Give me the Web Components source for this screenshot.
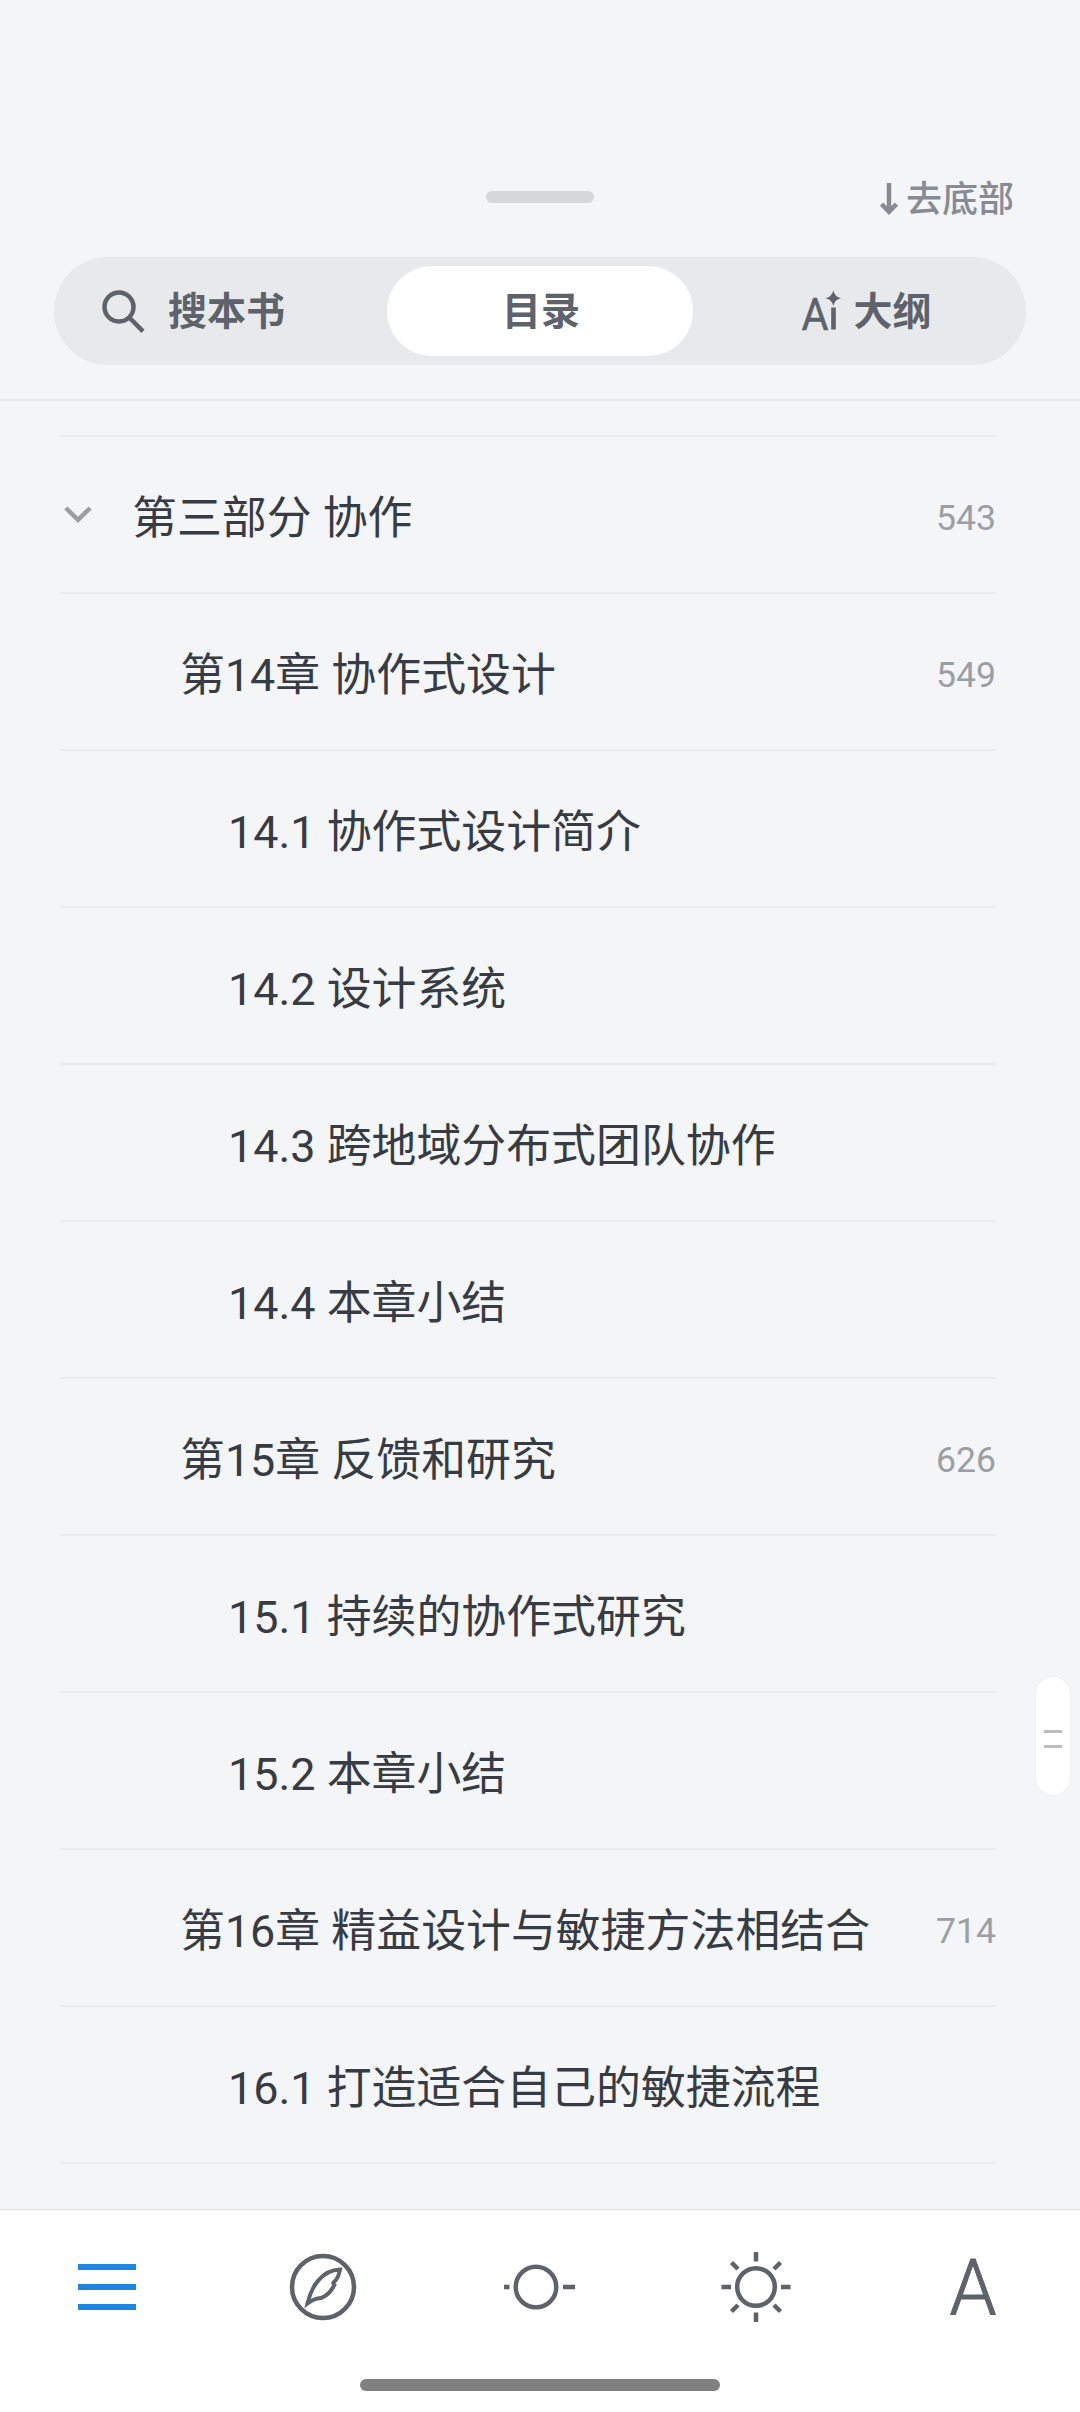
<!DOCTYPE html>
<html lang="zh-CN">
<head>
  <meta charset="UTF-8">
  <title>目录</title>
  <style>
    body {
      margin: 0;
      background: #f3f5f7;
      font-family: Roboto, "Noto Sans CJK SC", sans-serif;
    }
  </style>
</head>
<body>
  <reader-panel>
    <panel-header slot="header">去底部</panel-header>
    <segment-tabs slot="header">
      <segment-tab icon="search">搜本书</segment-tab>
      <segment-tab active>目录</segment-tab>
      <segment-tab icon="ai">大纲</segment-tab>
    </segment-tabs>
    <toc-row level="1" page="543" open>第三部分 协作</toc-row>
    <toc-row level="2" page="549">第14章 协作式设计</toc-row>
    <toc-row level="3">14.1 协作式设计简介</toc-row>
    <toc-row level="3">14.2 设计系统</toc-row>
    <toc-row level="3">14.3 跨地域分布式团队协作</toc-row>
    <toc-row level="3">14.4 本章小结</toc-row>
    <toc-row level="2" page="626">第15章 反馈和研究</toc-row>
    <toc-row level="3">15.1 持续的协作式研究</toc-row>
    <toc-row level="3">15.2 本章小结</toc-row>
    <toc-row level="2" page="714">第16章 精益设计与敏捷方法相结合</toc-row>
    <toc-row level="3">16.1 打造适合自己的敏捷流程</toc-row>
    <scroll-thumb slot="thumb"></scroll-thumb>
    <bottom-bar slot="footer"></bottom-bar>
  </reader-panel>

  <script>
    class ReaderPanel extends HTMLElement {
      constructor() {
        super();
        this.attachShadow({mode: 'open'});

        this.shadowRoot.innerHTML = `
        <style>
          :host {
            display: flex;
            flex-direction: column;
            position: relative;
            width: 1080px;
            height: 2412px;
            overflow: hidden;
          }
          header {
            box-sizing: border-box;
            height: 401px;
            padding-top: 170px;
            border-bottom: 2px solid #e9ebed;
          }
          main {
            flex: 1;
            padding: 34px 84px 0 60px;
          }
          .list {
            border-top: 2px solid #e9ebed;
          }
        </style>
        <header><slot name="header"></slot></header>
        <main><div class="list"><slot></slot></div></main>
        <slot name="footer"></slot>
        <slot name="thumb"></slot>
        `;
      }
    }

    class PanelHeader extends HTMLElement {
      constructor() {
        super();
        this.attachShadow({mode: 'open'});

        this.shadowRoot.innerHTML = `
        <style>
          :host {
            display: grid;
            grid-template-columns: 1fr 108px 1fr;
            align-items: center;
            height: 54px;
            margin-bottom: 33px;
          }
          .handle {
            grid-column: 2;
            height: 12px;
            border-radius: 6px;
            background: #d5d7d9;
          }
          .jump {
            display: flex;
            justify-content: flex-end;
            align-items: center;
            gap: 8px;
            padding-right: 66px;
            color: #868b94;
            font-size: 36px;
            font-weight: 500;
            line-height: 48px;
          }
          .jump span {
            padding-top: 6px;
          }
          svg {
            margin-top: 3px;
          }
        </style>
        <div class="handle"></div>
        <div class="jump">
          <svg width="18" height="32" viewBox="0 0 18 32" fill="none" stroke="currentColor" stroke-width="4.5">
            <path d="M9 0v29M1.500 21L9 28.800l7.500-7.800"/>
          </svg>
          <span><slot></slot></span>
        </div>
        `;
      }
    }

    class SegmentTabs extends HTMLElement {
      constructor() {
        super();
        this.attachShadow({mode: 'open'});

        this.shadowRoot.innerHTML = `
        <style>
          :host {
            display: grid;
            grid-template-columns: 324px 306px 324px;
            box-sizing: border-box;
            height: 108px;
            margin: 0 54px;
            padding: 9px;
            border-radius: 54px;
            background: #e7e9eb;
          }
        </style>
        <slot></slot>
        `;
      }
    }

    const tabIcons = {
      search: `
        <svg width="43" height="43" viewBox="0 0 43 43" fill="none" stroke="currentColor" stroke-width="4.5">
          <circle cx="17" cy="17" r="14.500"/>
          <path d="M27.300 27.500L41 41.300"/>
        </svg>`,
      // the dot of the i is a four-point star
      ai: `
        <svg width="40" height="58" viewBox="0 -8 40 58" fill="currentColor">
          <text x="0.500" y="39.500" font-size="45" textLength="27" lengthAdjust="spacingAndGlyphs">A</text>
          <path d="M30.200 17.500h4.600v22h-4.600zM32.300 0.500q1.400 6.300 7.700 7.700q-6.300 1.400-7.700 7.700q-1.400-6.300-7.700-7.700q6.300-1.400 7.700-7.700z"/>
        </svg>`
    };

    class SegmentTab extends HTMLElement {
      constructor() {
        super();
        this.attachShadow({mode: 'open'});
        const icon = this.getAttribute('icon');

        this.shadowRoot.innerHTML = `
        <style>
          :host {
            display: flex;
            align-items: center;
            justify-content: center;
            border-radius: 45px;
            color: #5d626b;
            font-size: 39px;
            font-weight: 700;
            line-height: 56px;
          }
          :host([active]) {
            background: #fff;
            padding-left: 2px;
          }
          :host([icon="search"]) {
            justify-content: flex-start;
            gap: 23px;
            padding-left: 39px;
          }
          :host([icon="ai"]) {
            gap: 12px;
            padding-left: 23px;
          }
          span {
            padding-top: 2px;
          }
          svg {
            font-weight: 400;
          }
          text {
            stroke: currentColor;
            stroke-width: 0.5px;
          }
        </style>
        ${icon ? tabIcons[icon] : ''}
        <span><slot></slot></span>
        `;
      }
    }

    class TocRow extends HTMLElement {
      constructor() {
        super();
        this.attachShadow({mode: 'open'});
        const indent = 72 + (this.getAttribute('level') - 1) * 48;
        const arrow = `
          <svg width="28" height="18" viewBox="0 0 28 18" fill="none" stroke="#9b9fa5" stroke-width="4.500">
            <path d="M1.800 2L14 13.800L26.200 2"/>
          </svg>`;

        this.shadowRoot.innerHTML = `
        <style>
          :host {
            display: flex;
            align-items: center;
            box-sizing: border-box;
            height: 157px;
            border-bottom: 2px solid #e9ebed;
            color: #373b43;
            font-size: 44.9px;
            line-height: 66px;
          }
          .lead {
            flex: none;
            width: ${indent}px;
            padding: 1px 0 0 4px;
            box-sizing: border-box;
            display: flex;
          }
          .title {
            flex: 1;
            padding-top: 8px;
            white-space: nowrap;
          }
          .page {
            color: #9b9fa5;
            font-size: 35.6px;
            line-height: 52px;
            padding-top: 6px;
          }
        </style>
        <div class="lead">${this.hasAttribute('open') ? arrow : ''}</div>
        <div class="title"><slot></slot></div>
        <div class="page">${this.getAttribute('page') || ''}</div>
        `;
      }
    }

    class ScrollThumb extends HTMLElement {
      constructor() {
        super();
        this.attachShadow({mode: 'open'});

        this.shadowRoot.innerHTML = `
        <style>
          :host {
            position: absolute;
            top: 1677px;
            right: 10px;
            display: flex;
            flex-direction: column;
            align-items: center;
            justify-content: center;
            gap: 12px;
            width: 34px;
            height: 118px;
            padding-top: 6px;
            box-sizing: border-box;
            border-radius: 17px;
            background: #fff;
            box-shadow: 0 0 2px rgba(0, 0, 0, 0.08);
          }
          i {
            width: 18px;
            height: 3px;
            background: #bdbdbd;
          }
        </style>
        <i></i>
        <i></i>
        `;
      }
    }

    class BottomBar extends HTMLElement {
      constructor() {
        super();
        this.attachShadow({mode: 'open'});

        this.shadowRoot.innerHTML = `
        <style>
          :host {
            display: flex;
            flex-direction: column;
            align-items: center;
            box-sizing: border-box;
            height: 203px;
            border-top: 1px solid #dcdedf;
            background: #fff;
            color: #5d626b;
          }
          nav {
            display: flex;
            justify-content: space-between;
            align-items: center;
            box-sizing: border-box;
            width: 100%;
            height: 154px;
            padding: 0 72px;
          }
          svg {
            fill: none;
            stroke: currentColor;
            stroke-width: 4.5;
          }
          .toc {
            color: #1f85e3;
            stroke-width: 6;
          }
          text {
            fill: currentColor;
            stroke-width: 1px;
          }
          .home {
            width: 360px;
            height: 12px;
            margin-top: 15px;
            border-radius: 6px;
            background: #808080;
          }
        </style>
        <nav>
          <svg class="toc" width="72" height="72" viewBox="0 0 72 72">
            <path d="M6 16h58M6 36h58M6 56h58"/>
          </svg>
          <svg width="72" height="72" viewBox="0 0 72 72">
            <circle cx="35" cy="36" r="31"/>
            <path stroke-width="4" d="M19.500 52.500C23 37 33 19 52 18.500C51 24 49.500 28 46.500 30.500Q44 32 46.300 34C41 44.500 34 47.500 30 47.500Q25.500 48 19.500 52.500z"/>
          </svg>
          <svg width="72" height="72" viewBox="0 0 72 72">
            <circle cx="32" cy="36" r="20.300"/>
            <path d="M0 36h5.500M59 36h12"/>
          </svg>
          <svg width="72" height="72" viewBox="0 0 72 72">
            <circle cx="36" cy="36" r="18.800"/>
            <path d="M36 1v9.500M36 61.500V71M1.500 36h9.500M61 36h9.500M11.500 11.500l6.500 6.500M54 18l6.500-6.500M11.500 60.500l6.500-6.500M54 54l6.500 6.500"/>
          </svg>
          <svg width="72" height="104" viewBox="0 -16 72 104">
            <text x="13.500" y="64" font-size="78" font-weight="300" textLength="47" lengthAdjust="spacingAndGlyphs">A</text>
          </svg>
        </nav>
        <div class="home"></div>
        `;
      }
    }

    customElements.define('reader-panel', ReaderPanel);
    customElements.define('panel-header', PanelHeader);
    customElements.define('segment-tabs', SegmentTabs);
    customElements.define('segment-tab', SegmentTab);
    customElements.define('toc-row', TocRow);
    customElements.define('scroll-thumb', ScrollThumb);
    customElements.define('bottom-bar', BottomBar);
  </script>
</body>
</html>
